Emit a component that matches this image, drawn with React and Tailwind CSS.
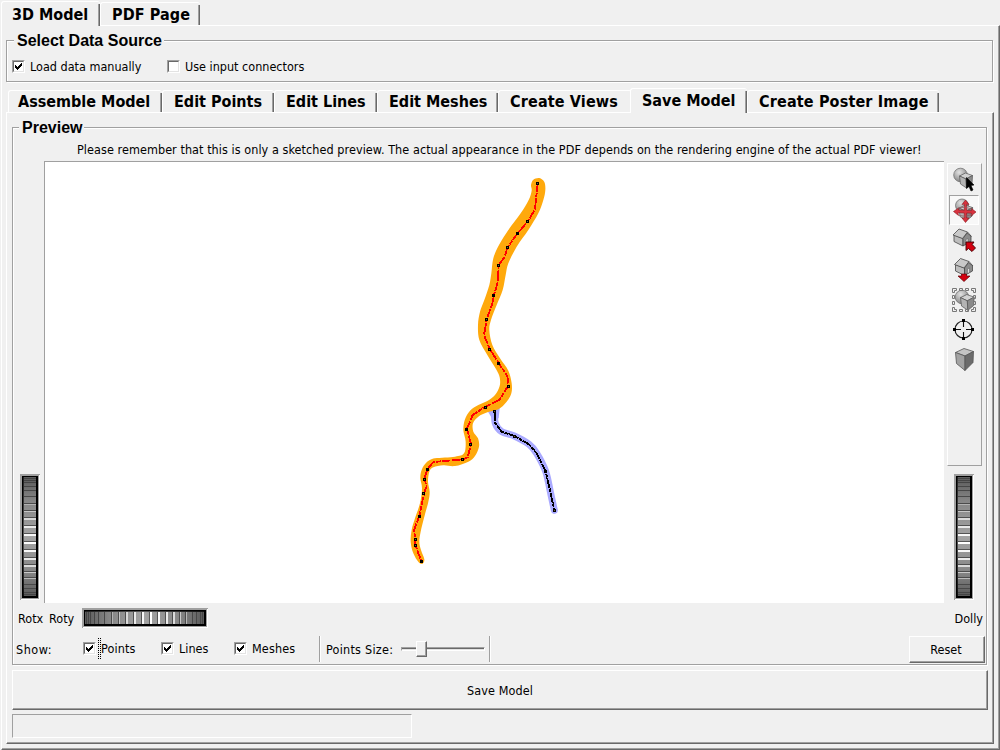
import React from "react";

const LABEL = "font-['DejaVu_Sans_Condensed','DejaVu_Sans',sans-serif] [font-stretch:condensed] whitespace-nowrap text-black";
const SMALL = LABEL + " text-[12.5px] leading-[16px]";

function Check({ on }) {
  return (
    <span className="block h-[13px] w-[13px] shrink-0 border border-t-[#a0a0a0] border-l-[#a0a0a0] border-r-white border-b-white">
      <span className="block h-[11px] w-[11px] border border-t-[#696969] border-l-[#696969] border-r-[#e3e3e3] border-b-[#e3e3e3] bg-white">
        {on && (
          <svg width="9" height="9" viewBox="0 0 9 9" shapeRendering="crispEdges" className="block">
            <path d="M1 3h1v1h1v1h1v-1h1v-1h1v-1h1v-1h1v3h-1v1h-1v1h-1v1h-1v1h-1v-1h-1v-1h-1z" fill="#000" />
          </svg>
        )}
      </span>
    </span>
  );
}

function Tab({ className, textClass, children }) {
  return (
    <div
      className={
        "relative box-border shrink-0 rounded-t-[3px] border-t border-l border-white bg-[#f0f0f0] " +
        LABEL + " text-[16px] leading-[20px] font-bold " + className
      }
    >
      <span className={"block " + textClass}>{children}</span>
      <span className="absolute top-[2px] right-0 bottom-0 w-[2px] border-l border-[#a0a0a0] bg-[#696969]" />
    </div>
  );
}

function Legend({ className, children }) {
  return (
    <div className={"absolute bg-[#f0f0f0] pr-[2px] pl-[3px] font-['Liberation_Sans',Arial,sans-serif] text-[16px] leading-[18px] font-bold whitespace-nowrap text-black " + className}>
      {children}
    </div>
  );
}

const ETCHED = "border border-[#a0a0a0] shadow-[1px_1px_0_#fff,inset_1px_1px_0_#fff]";

const GROOVES = [4, 6, 8, 12, 16, 22, 29, 36, 43, 51, 59, 67, 75, 83, 90, 97, 103, 110, 114, 118, 120];

function Wheel({ horizontal, id }) {
  const gray = (v) => `rgb(${v},${v},${v})`;
  return (
    <svg width={horizontal ? 126 : 20} height={horizontal ? 20 : 126} shapeRendering="crispEdges" className="block">
      <defs>
        <linearGradient id={id} x1="0" y1="0" x2="0" y2="1">
          <stop offset="0" stopColor="#5a5a5a" />
          <stop offset="0.2" stopColor="#868686" />
          <stop offset="0.5" stopColor="#a4a4a4" />
          <stop offset="0.8" stopColor="#868686" />
          <stop offset="1" stopColor="#5a5a5a" />
        </linearGradient>
        <linearGradient id={id + "e"} x1="0" y1="0" x2="0" y2="1">
          <stop offset="0" stopColor="#222" />
          <stop offset="0.5" stopColor="#585858" />
          <stop offset="1" stopColor="#111" />
        </linearGradient>
      </defs>
      <g transform={horizontal ? "matrix(0 1 1 0 0 0)" : undefined}>
        <rect width="20" height="126" fill="#fff" />
        <path d="M0 0h20v1h-1v124h-18v1h-1z" fill="#a0a0a0" />
        <rect x="2" y="2" width="16" height="122" fill="#000" />
        <rect x="3" y="3" width="1" height="119" fill={`url(#${id}e)`} />
        <rect x="4" y="3" width="12" height="119" fill={`url(#${id})`} />
        {GROOVES.map((y) => {
          const d = Math.abs(y - 67) / 60;
          const v = Math.round(255 - 150 * Math.pow(d, 1.5));
          return (
            <g key={y}>
              <rect x="4" y={y} width="12" height="1" fill={gray(Math.round(86 - 18 * d))} />
              {d < 0.66 && <rect x="4" y={y + 1} width="12" height={d < 0.5 ? 2 : 1} fill={gray(v)} />}
            </g>
          );
        })}
      </g>
    </svg>
  );
}

function smooth(pts, closed) {
  const n = pts.length;
  const at = (i) => (closed ? pts[(i + n) % n] : pts[Math.max(0, Math.min(n - 1, i))]);
  let d = `M${pts[0][0]} ${pts[0][1]}`;
  for (let i = 0; i < (closed ? n : n - 1); i++) {
    const [a, b, c, e] = [at(i - 1), at(i), at(i + 1), at(i + 2)];
    d += `C${b[0] + (c[0] - a[0]) / 6} ${b[1] + (c[1] - a[1]) / 6} ${c[0] - (e[0] - b[0]) / 6} ${c[1] - (e[1] - b[1]) / 6} ${c[0]} ${c[1]}`;
  }
  return d + (closed ? "Z" : "");
}

const MESH = [
  [393, 45], [395, 62], [386, 90], [362, 130], [325, 180], [297, 225], [280, 265], [274, 310], [268, 345], [253, 390],
  [240, 425], [234, 465], [238, 510], [262, 555], [288, 597], [299, 622], [299, 648], [285, 675], [262, 693], [235, 705],
  [210, 722], [195, 748], [190, 780], [197, 815], [192, 850], [165, 860], [105, 865], [80, 877], [65, 900], [61, 925],
  [66, 955], [60, 1000], [45, 1045], [35, 1080], [32, 1115], [40, 1150], [56, 1177], [68, 1181], [73, 1168], [63, 1140],
  [58, 1115], [62, 1085], [73, 1040], [85, 995], [89, 965], [84, 935], [88, 905], [100, 892], [130, 886], [165, 888],
  [205, 875], [225, 858], [237, 830], [234, 805], [220, 785], [219, 760], [235, 740], [262, 727], [295, 718], [320, 695],
  [334, 670], [335, 640], [325, 602], [300, 565], [277, 525], [268, 480], [273, 450], [290, 405], [308, 360], [317, 315],
  [325, 280], [350, 230], [385, 180], [415, 130], [430, 90], [436, 60], [433, 36], [418, 24], [400, 29],
];
const LINE = [
  [413, 40], [405, 118], [385, 152], [353, 190], [323, 231], [313, 262], [296, 285], [294, 335], [282, 374], [277, 400],
  [260, 449], [252, 495], [269, 536], [297, 581], [322, 618], [325, 647], [298, 690], [256, 710], [218, 735], [201, 776],
  [213, 822], [203, 862], [188, 868], [100, 876], [82, 898], [73, 927], [80, 948], [72, 971], [58, 1038], [42, 1080],
  [46, 1106], [46, 1126], [64, 1173],
];
const DOTS = [
  [413, 40], [384, 153], [354, 191], [323, 231], [296, 286], [282, 375], [260, 449], [270, 537], [297, 581], [325, 648],
  [256, 711], [201, 777], [213, 823], [188, 868], [82, 898], [73, 928], [72, 971], [58, 1039], [46, 1107], [46, 1126],
  [64, 1173], [284, 723], [343, 798], [437, 904], [463, 1021],
];
const BRANCH = [[284, 723], [286, 760], [305, 785], [343, 798], [387, 823], [410, 850], [437, 904], [452, 970], [463, 1021]];

function Vessels() {
  const poly = (p) => p.map((q) => q.join(",")).join(" ");
  return (
    <svg width="899" height="441" className="block">
      <g transform="translate(355 8) scale(0.33333)">
        <path d={smooth(BRANCH)} fill="none" stroke="#aaaaff" strokeWidth="21" strokeLinecap="round" />
        <path d="M262 722L300 706L296 745L276 745Z" fill="#aaaaff" />
        <path d={smooth(MESH, true)} fill="#ffa90c" />
        <g shapeRendering="crispEdges">
          <polyline points={poly(LINE)} fill="none" stroke="#ff0000" strokeWidth="5.5" strokeDasharray="26 3 13 3 34 4" />
          <polyline points={poly(BRANCH)} fill="none" stroke="#000" strokeWidth="5.5" strokeDasharray="30 2 12 2" />
        </g>
        {DOTS.map(([x, y], i) => (
          <g key={i} shapeRendering="crispEdges">
            <path d={`M${x - 5} ${y - 4}h9v9h-9z`} fill="#000" />
            {i % 3 !== 2 && <path d={`M${x - 2} ${y - 1}h3v3h-3z`} fill="#776030" />}
          </g>
        ))}
      </g>
    </svg>
  );
}

function Cube({ x, y, s = 1 }) {
  return (
    <g transform={`translate(${x} ${y}) scale(${s})`} stroke="#555" strokeWidth="0.7" strokeLinejoin="round">
      <path d="M0 3L6 0L13 2.5L6.5 6Z" fill="#d2d2d2" />
      <path d="M0 3L6.5 6L7 15L1 11Z" fill="#b4b4b4" />
      <path d="M6.5 6L13 2.5L12.500 10.500L7 15Z" fill="#8a8a8a" />
    </g>
  );
}

function House({ x, y }) {
  return (
    <g transform={`translate(${x} ${y})`} stroke="#484848" strokeWidth="0.8" strokeLinejoin="round">
      <path d="M1 6.500L10 10V17.500L1 13Z" fill="#bdbdbd" />
      <path d="M10 10L14 4.500L18 7.500V13L10 17.500Z" fill="#8c8c8c" />
      <path d="M0 6.500L6 0.500L14.500 3.500L9.500 10Z" fill="#c9c9c9" />
      <path d="M14.500 3.500L18.500 8" fill="none" />
      <path d="M13 15.500V11L15 10V14.500Z" fill="#ddd" strokeWidth="0.4" />
    </g>
  );
}

function Ball({ x, y, r }) {
  return <circle cx={x} cy={y} r={r} fill="url(#ball)" stroke="#666" strokeWidth="0.7" />;
}

function Icon({ children }) {
  return (
    <svg width="30" height="30" viewBox="0 0 30 30" className="block shrink-0">
      {children}
    </svg>
  );
}

function Toolbar() {
  return (
    <div className="box-border flex h-[303px] w-[35px] flex-col items-start border border-t-white border-l-white border-r-[#a0a0a0] border-b-[#a0a0a0] pl-px">
      <svg width="0" height="0" className="absolute">
        <defs>
          <radialGradient id="ball" cx="0.4" cy="0.3" r="0.7">
            <stop offset="0" stopColor="#e2e2e2" />
            <stop offset="1" stopColor="#858585" />
          </radialGradient>
        </defs>
      </svg>
      <Icon>
        <Ball x={11.500} y={11} r={6.800} />
        <Cube x={10.500} y={9} s={1} />
        <path d="M17.500 13.500V24.500L20 22.500L22 27L24 26L22 21.500L25 21Z" fill="#000" stroke="#000" strokeWidth="0.6" />
      </Icon>
      <div className="mt-[1px] box-border h-[30px] w-[30px] shrink-0 border border-t-[#a0a0a0] border-l-[#a0a0a0] border-r-white border-b-white bg-[#f8f8f8]">
        <svg width="28" height="28" viewBox="0 0 28 28" className="block">
          <Ball x={12} y={9.500} r={6.500} />
          <Cube x={9} y={9} s={1.05} />
          <path
            d="M15.500 4L19 8.500L16.700 8V14.200L21.500 14.700V12.500L26 16L21 20L21.500 17.200L16.700 17L16.700 22L19 22L15.500 26.500L12 22H14.300V17L8 16.700L8.500 19.500L3.500 15.500L8.500 12V14L14.300 14.200V8L12 8.500Z"
            fill="#d9333f" stroke="#8d1920" strokeWidth="0.6"
          />
          <path d="M8 12Q15 10 22 13M9 19.500Q15 21.500 22 18.500" fill="none" stroke="#8f5a5e" strokeWidth="0.8" />
        </svg>
      </div>
      <Icon>
        <House x={4} y={3.500} />
        <path transform="translate(0 2.5)" d="M17 14.500L25 14.500L23.200 17L26.500 20.500L23 24L19.500 21L17 23Z" fill="#d4000f" stroke="#3d0003" strokeWidth="0.9" />
      </Icon>
      <Icon>
        <House x={5.500} y={3} />
        <path transform="translate(0 2)" d="M12.500 17H17.500V19H21L15 24.500L9 19H12.500Z" fill="#d4000f" stroke="#5c0006" strokeWidth="0.7" />
      </Icon>
      <Icon>
        <Ball x={13} y={12} r={6.800} />
        <Cube x={11.500} y={9.500} s={1.05} />
        <g fill="none" stroke="#777" strokeWidth="1">
          <path d="M3.500 7.500V3.500H7.500V5.500H5.500V7.500ZM22.500 3.500H26.500V7.500H24.500V5.500H22.500ZM3.500 22.500H5.500V24.500H7.500V26.500H3.500ZM26.500 22.500V26.500H22.500V24.500H24.500V22.500Z" />
          <path d="M10.500 3.500h3v2h-3zM16.500 3.500h3v2h-3zM10.500 24.500h3v2h-3zM16.500 24.500h3v2h-3zM3.500 10.500h2v3h-2zM3.500 16.500h2v3h-2zM24.500 10.500h2v3h-2zM24.500 16.500h2v3h-2z" />
        </g>
      </Icon>
      <Icon>
        <circle cx="14.500" cy="14.500" r="8.500" fill="none" stroke="#222" strokeWidth="1.2" />
        <path d="M14.500 5V12M14.500 17V24M5 14.500H12M17 14.500H24" stroke="#111" strokeWidth="1.100" />
        <path d="M13 4h3v3h-3zM13 22h3v3h-3zM4 13h3v3h-3zM22 13h3v3h-3z" fill="#000" />
      </Icon>
      <Icon>
        <g stroke="#555" strokeWidth="0.8" strokeLinejoin="round">
          <path d="M6.500 7.500L15 3.500L24.500 6.500L16 11Z" fill="#c4c4c4" />
          <path d="M6.500 7.500L16 11V25.500L7.500 18.500Z" fill="#a2a2a2" />
          <path d="M16 11L24.500 6.500L24 17.500L16 25.500Z" fill="#6b6b6b" />
        </g>
      </Icon>
    </div>
  );
}

function PreviewGroup() {
  return (
    <div className={"relative box-border flex h-[538px] w-[975px] flex-col " + ETCHED}>
      <Legend className="top-[-9px] left-[6px]">Preview</Legend>
      <div className={SMALL + " mt-[14px] h-[19px] pl-[64px] tracking-[0.063px]"}>
        Please remember that this is only a sketched preview. The actual appearance in the PDF depends on the rendering engine of the actual PDF viewer!
      </div>
      <div className="flex h-[442px]">
        <div className="flex w-[31px] items-end pb-[3px] pl-[7px]">
          <Wheel id="wx" />
        </div>
        <div className="box-border h-[442px] w-[900px] border-t border-l border-[#a0a0a0] bg-white">
          <Vessels />
        </div>
        <div className="flex flex-col pt-[2px] pl-[3px]">
          <Toolbar />
          <div className="mt-[8px] pl-[7px]">
            <Wheel id="wd" />
          </div>
        </div>
      </div>
      <div className="flex h-[33px] pl-[5px]">
        <span className={SMALL + " mt-[8px] w-[31px]"}>Rotx</span>
        <span className={SMALL + " mt-[8px] w-[33px]"}>Roty</span>
        <div className="mt-[5px]">
          <Wheel horizontal id="wy" />
        </div>
        <span className={SMALL + " mt-[8px] ml-auto pr-[3px]"}>Dolly</span>
      </div>
      <div className="flex h-[28px] pl-[3px]">
        <span className={SMALL + " mt-[6px] w-[67px] tracking-[0.5px]"}>Show:</span>
        <span className="mt-[6px]"><Check on /></span>
        <span className="mt-[2px] ml-[2px] h-[21px] w-[3px] border-x border-dotted border-black" />
        <span className={SMALL + " mt-[5px] w-[60px] tracking-[0.15px]"}>Points</span>
        <span className="mt-[6px]"><Check on /></span>
        <span className={SMALL + " mt-[5px] w-[60px] pl-[5px]"}>Lines</span>
        <span className="mt-[6px]"><Check on /></span>
        <span className={SMALL + " mt-[5px] w-[72px] pl-[5px] tracking-[0.15px]"}>Meshes</span>
        <span className="h-[26px] w-[2px] border-l border-[#a0a0a0] bg-white" />
        <span className={SMALL + " mt-[6px] w-[80px] pl-[5px] tracking-[0.25px]"}>Points Size:</span>
        <div className="relative mt-[11px] h-[4px] w-[84px] border border-t-[#a0a0a0] border-l-[#a0a0a0] border-r-white border-b-white bg-[#696969]">
          <span className="absolute top-[1px] left-0 h-[1px] w-full bg-[#e3e3e3]" />
          <span className="absolute top-[-7px] left-[14px] h-[16px] w-[11px] border border-t-white border-l-white border-r-[#696969] border-b-[#696969] bg-[#f0f0f0] shadow-[inset_-1px_-1px_0_#a0a0a0]" />
        </div>
        <span className="ml-[4px] h-[26px] w-[2px] border-l border-[#a0a0a0] bg-white" />
        <button className={SMALL + " mr-[1px] ml-auto box-border h-[27px] w-[76px] border border-t-white border-l-white border-r-[#696969] border-b-[#696969] bg-[#f0f0f0] pr-[2px] shadow-[inset_-1px_-1px_0_#a0a0a0]"}>
          Reset
        </button>
      </div>
    </div>
  );
}

export default function App() {
  return (
    <div className="flex h-[750px] w-[1000px] flex-col overflow-hidden bg-[#f0f0f0] pl-[1px]">
      <div className="z-10 -mb-px flex h-[26px] items-end">
        <Tab className="h-[25px] w-[99px]" textClass="pl-[10px] pt-[3px]">3D Model</Tab>
        <Tab className="mb-[1px] h-[23px] w-[100px]" textClass="pl-[11px] pt-[2px] tracking-[0.1px]">PDF Page</Tab>
      </div>
      <div className="box-border flex h-[725px] w-[999px] flex-col border border-t-white border-l-white border-r-[#696969] border-b-[#696969] pt-[14px] pl-[4px] shadow-[inset_-1px_-1px_0_#a0a0a0]">
        <div className={"relative box-border h-[42px] w-[987px] " + ETCHED}>
          <Legend className="top-[-9px] left-[7px]">Select Data Source</Legend>
          <div className="flex items-start pt-[19px] pl-[5px]">
            <Check on />
            <span className={SMALL + " -mt-px w-[142px] pl-[5px]"}>Load data manually</span>
            <Check />
            <span className={SMALL + " -mt-px pl-[5px]"}>Use input connectors</span>
          </div>
        </div>
        <div className="z-10 mt-[6px] -mb-px flex h-[25px] items-end pl-[2px]">
          <Tab className="mb-px h-[22px] w-[154px]" textClass="pl-[9px] pt-[1px]">Assemble Model</Tab>
          <Tab className="mb-px h-[22px] w-[112px]" textClass="pl-[11px] pt-[1px]">Edit Points</Tab>
          <Tab className="mb-px h-[22px] w-[103px]" textClass="pl-[11px] pt-[1px]">Edit Lines</Tab>
          <Tab className="mb-px h-[22px] w-[121px]" textClass="pl-[11px] pt-[1px]">Edit Meshes</Tab>
          <Tab className="mb-px h-[22px] w-[134px]" textClass="pl-[11px] pt-[1px] tracking-[0.15px]">Create Views</Tab>
          <Tab className="z-10 -ml-[2px] h-[25px] w-[117px]" textClass="pl-[11px] pt-[2px]">Save Model</Tab>
          <Tab className="mb-px h-[22px] w-[192px]" textClass="pl-[11px] pt-[1px] tracking-[0.16px]">Create Poster Image</Tab>
        </div>
        <div className="box-border flex h-[632px] w-[988px] flex-col border border-t-white border-l-white border-r-[#696969] border-b-[#696969] pt-[14px] pl-[5px] shadow-[inset_-1px_-1px_0_#a0a0a0]">
          <PreviewGroup />
          <button className={SMALL + " mt-[5px] box-border h-[40px] w-[976px] shrink-0 border border-t-white border-l-white border-r-[#696969] border-b-[#696969] bg-[#f0f0f0] pt-[2px] tracking-[0.1px] shadow-[inset_-1px_-1px_0_#a0a0a0]"}>
            Save Model
          </button>
          <div className="mt-[4px] box-border h-[24px] w-[400px] shrink-0 border border-t-[#a0a0a0] border-l-[#a0a0a0] border-r-white border-b-white" />
        </div>
      </div>
    </div>
  );
}
